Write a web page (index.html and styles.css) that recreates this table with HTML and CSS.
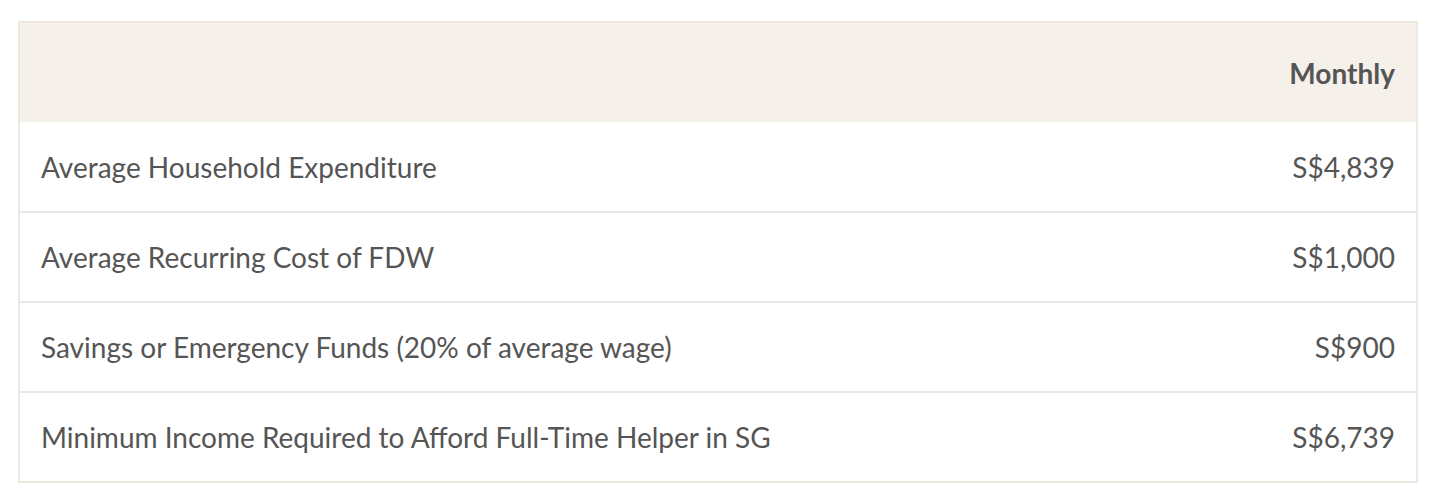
FILE: index.html
```html
<!DOCTYPE html>
<html>
<head>
<meta charset="utf-8">
<link rel="stylesheet" href="styles.css">
</head>
<body>
<div class="wrap">
<table class="cost">
  <thead>
    <tr><th class="label"></th><th class="num">Monthly</th></tr>
  </thead>
  <tbody>
    <tr><td class="label">Average Household Expenditure</td><td class="num">S$4,839</td></tr>
    <tr><td class="label">Average Recurring Cost of FDW</td><td class="num">S$1,000</td></tr>
    <tr><td class="label">Savings or Emergency Funds (20% of average wage)</td><td class="num">S$900</td></tr>
    <tr><td class="label">Minimum Income Required to Afford Full-Time Helper in SG</td><td class="num">S$6,739</td></tr>
  </tbody>
</table>
</div>
</body>
</html>
```
FILE: styles.css
```css
html, body { margin: 0; padding: 0; background: #fff; }
.wrap { padding: 21px 14px 0 18px; }
.cost {
  width: 1400px;
  border-collapse: collapse;
  border: 2px solid #ede8df;
  font-family: "Lato", "Source Sans Pro", sans-serif;
  font-size: 28px;
  color: #555;
}
.cost th, .cost td { padding: 0 21px 0 21px; vertical-align: middle; }
.cost thead tr { background: #f5f0e9; height: 100px; }
.cost th { font-weight: bold; color: #555; }
.cost tbody tr { height: 90px; border-top: 2px solid #eae8e5; }
.cost tbody tr:first-child { border-top: none; }
.label { text-align: left; }
.num { text-align: right; }
```
